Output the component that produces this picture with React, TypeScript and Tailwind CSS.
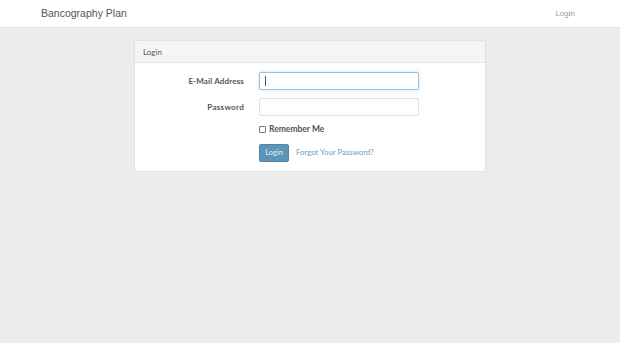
import React from 'react';

export default function App() {
    return (
        <div className="min-h-[343px] bg-[#ececec] font-['Lato',sans-serif] text-[#636b6f]">
            {/* Navbar */}
            <nav className="h-[28px] bg-white border-b border-[#e3e3e3] flex items-center justify-between pl-[41px] pr-[45px]">
                <span className="font-['Liberation_Sans',sans-serif] text-[10.5px] text-[#555]">Bancography Plan</span>
                <span className="font-['Liberation_Sans',sans-serif] text-[8px] text-[#999]">Login</span>
            </nav>

            {/* Login panel */}
            <div className="mx-auto mt-[12px] w-[352px] bg-white border border-[#e2e2e2] rounded-[2px]">
                <div className="h-[22px] bg-[#f5f5f5] border-b border-[#e4e4e4] flex items-center px-[8px] text-[8px] text-[#555] rounded-t-[2px]">
                    Login
                </div>

                <div className="pt-[9px] pb-[9px]">
                    {/* Email */}
                    <div className="flex items-center h-[18px]">
                        <label className="w-[116px] pr-[7px] text-right text-[8px] font-bold tracking-[0.15px] text-[#555]">E-Mail Address</label>
                        <div className="relative ml-[8px] w-[160px] h-[18px] rounded-[2px] border border-[#9cc0dc] shadow-[0_0_3px_rgba(102,175,233,0.45)] bg-white">
                            <span className="absolute left-[5px] top-[3px] w-px h-[10px] bg-[#555]" />
                        </div>
                    </div>

                    {/* Password */}
                    <div className="flex items-center h-[18px] mt-[8px]">
                        <label className="w-[116px] pr-[7px] text-right text-[8px] font-bold tracking-[0.3px] text-[#555]">Password</label>
                        <div className="ml-[8px] w-[160px] h-[18px] rounded-[2px] border border-[#e0e0e0] bg-white" />
                    </div>

                    {/* Remember */}
                    <div className="flex items-center mt-[8px] ml-[124px] h-[10px]">
                        <span className="w-[7px] h-[7px] border border-[#777] rounded-[1px] bg-white" />
                        <span className="ml-[3px] text-[8.5px] font-bold text-[#555]">Remember Me</span>
                    </div>

                    {/* Actions */}
                    <div className="flex items-center mt-[10px] ml-[124px]">
                        <button className="w-[30px] h-[18px] rounded-[2px] bg-[#5b95b8] border border-[#4e87aa] text-[7.5px] text-[#e6eff5]">
                            Login
                        </button>
                        <span className="ml-[7px] text-[7.8px] text-[#6aa0c6]">Forgot Your Password?</span>
                    </div>
                </div>
            </div>
        </div>
    );
}
